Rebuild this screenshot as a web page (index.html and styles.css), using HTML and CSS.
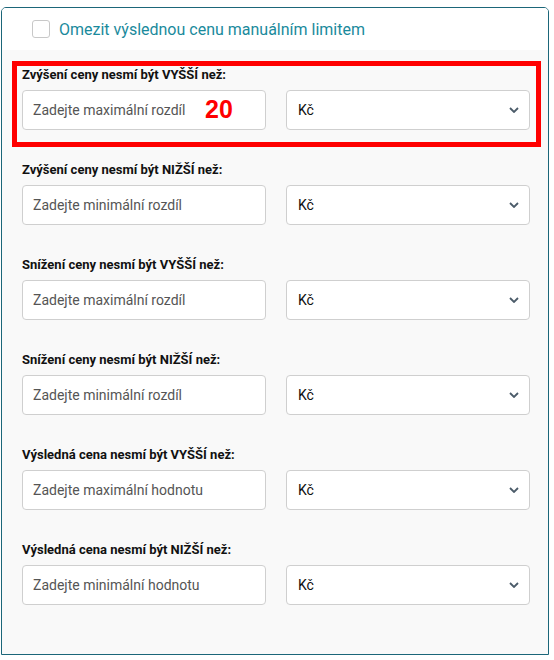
FILE: index.html
```html
<!DOCTYPE html>
<html lang="cs">
<head>
<meta charset="utf-8">
<link rel="stylesheet" href="styles.css">
</head>
<body>
<div class="panel">
  <div class="panel-head">
    <label class="check">
      <span class="box"></span>
      <span class="check-text">Omezit výslednou cenu manuálním limitem</span>
    </label>
  </div>
  <div class="panel-body">
    <div class="group highlighted">
      <div class="label">Zvýšení ceny nesmí být VYŠŠÍ než:</div>
      <div class="row">
        <div class="input-wrap">
          <input class="input" type="text" placeholder="Zadejte maximální rozdíl">
          <span class="note">20</span>
        </div>
        <div class="select"><span>Kč</span><svg class="chev" width="10" height="6" viewBox="0 0 10 6"><path d="M1 1l4 4 4-4" fill="none" stroke="#4b5b69" stroke-width="1.8"/></svg></div>
      </div>
    </div>
    <div class="group">
      <div class="label">Zvýšení ceny nesmí být NIŽŠÍ než:</div>
      <div class="row">
        <div class="input-wrap"><input class="input" type="text" placeholder="Zadejte minimální rozdíl"></div>
        <div class="select"><span>Kč</span><svg class="chev" width="10" height="6" viewBox="0 0 10 6"><path d="M1 1l4 4 4-4" fill="none" stroke="#4b5b69" stroke-width="1.8"/></svg></div>
      </div>
    </div>
    <div class="group">
      <div class="label">Snížení ceny nesmí být VYŠŠÍ než:</div>
      <div class="row">
        <div class="input-wrap"><input class="input" type="text" placeholder="Zadejte maximální rozdíl"></div>
        <div class="select"><span>Kč</span><svg class="chev" width="10" height="6" viewBox="0 0 10 6"><path d="M1 1l4 4 4-4" fill="none" stroke="#4b5b69" stroke-width="1.8"/></svg></div>
      </div>
    </div>
    <div class="group">
      <div class="label">Snížení ceny nesmí být NIŽŠÍ než:</div>
      <div class="row">
        <div class="input-wrap"><input class="input" type="text" placeholder="Zadejte minimální rozdíl"></div>
        <div class="select"><span>Kč</span><svg class="chev" width="10" height="6" viewBox="0 0 10 6"><path d="M1 1l4 4 4-4" fill="none" stroke="#4b5b69" stroke-width="1.8"/></svg></div>
      </div>
    </div>
    <div class="group">
      <div class="label">Výsledná cena nesmí být VYŠŠÍ než:</div>
      <div class="row">
        <div class="input-wrap"><input class="input" type="text" placeholder="Zadejte maximální hodnotu"></div>
        <div class="select"><span>Kč</span><svg class="chev" width="10" height="6" viewBox="0 0 10 6"><path d="M1 1l4 4 4-4" fill="none" stroke="#4b5b69" stroke-width="1.8"/></svg></div>
      </div>
    </div>
    <div class="group">
      <div class="label">Výsledná cena nesmí být NIŽŠÍ než:</div>
      <div class="row">
        <div class="input-wrap"><input class="input" type="text" placeholder="Zadejte minimální hodnotu"></div>
        <div class="select"><span>Kč</span><svg class="chev" width="10" height="6" viewBox="0 0 10 6"><path d="M1 1l4 4 4-4" fill="none" stroke="#4b5b69" stroke-width="1.8"/></svg></div>
      </div>
    </div>
  </div>
</div>
</body>
</html>
```
FILE: styles.css
```css
html, body {
  margin: 0;
  padding: 0;
  background: #ffffff;
  font-family: Roboto, "Liberation Sans", sans-serif;
}
.panel {
  margin: 7px 0 0 1px;
  width: 548px;
  height: 648px;
  box-sizing: border-box;
  border: 1.5px solid #1b6679;
  border-radius: 5px 5px 0 0;
  background: #f9f9f9;
  overflow: hidden;
}
.panel-head {
  background: #ffffff;
  height: 42px;
  display: flex;
  align-items: center;
  padding-left: 30px;
}
.check {
  display: flex;
  align-items: center;
  gap: 9px;
}
.box {
  width: 16px;
  height: 16px;
  border: 1px solid #c8c8c8;
  border-radius: 3px;
  background: #fff;
}
.check-text {
  font-size: 16px;
  color: #1a8a9c;
}
.panel-body {
  padding: 17px 18px 0 20px;
}
.group {
  margin-bottom: 32px;
  position: relative;
}
.highlighted::after {
  content: "";
  position: absolute;
  top: -6px;
  left: -10px;
  right: -11px;
  bottom: -17px;
  border: 5px solid #ff0000;
  pointer-events: none;
}
.label {
  font-size: 13px;
  font-weight: 700;
  line-height: 16px;
  color: #111;
  margin-bottom: 7px;
}
.row {
  display: grid;
  grid-template-columns: 1fr 1fr;
  gap: 20px;
}
.input-wrap {
  position: relative;
}
.input {
  display: block;
  width: 100%;
  height: 40px;
  box-sizing: border-box;
  border: 1px solid #cfcfcf;
  border-radius: 4px;
  background: #fff;
  padding: 0 10px;
  font-family: Roboto, "Liberation Sans", sans-serif;
  font-size: 14px;
  color: #333;
}
.input::placeholder {
  color: #555;
  opacity: 1;
}
.note {
  position: absolute;
  left: 183px;
  top: 5px;
  font-family: "Liberation Sans", Arial, sans-serif;
  font-weight: 700;
  font-size: 25px;
  color: #ff0000;
}
.select {
  height: 40px;
  box-sizing: border-box;
  border: 1px solid #cfcfcf;
  border-radius: 4px;
  background: #fff;
  display: flex;
  align-items: center;
  justify-content: space-between;
  padding: 0 10px 0 11px;
  font-size: 14px;
  color: #111;
}
.chev {
  display: block;
}
```
